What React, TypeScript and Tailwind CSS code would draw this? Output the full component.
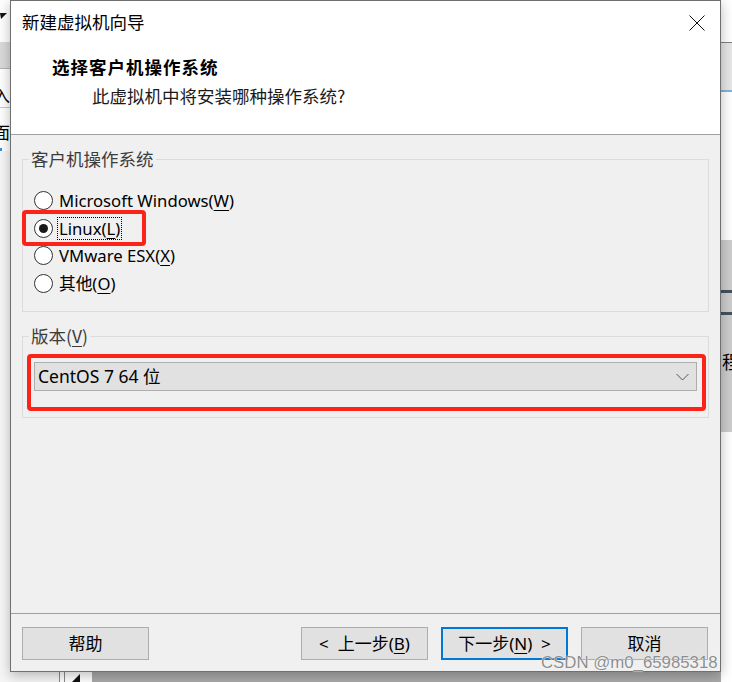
import type { ReactNode } from "react";

const ui = "font-[family-name:'Noto_Sans','Noto_Sans_CJK_SC',sans-serif]";
const cjk = "font-[family-name:'Noto_Sans_CJK_SC',sans-serif]";

function Key({ children }: { children: ReactNode }) {
  return <span className="underline underline-offset-[3px] decoration-1">{children}</span>;
}

function Radio({ checked = false }: { checked?: boolean }) {
  return (
    <span className="flex h-[19px] w-[19px] shrink-0 items-center justify-center rounded-full border border-[#333] bg-white">
      {checked && <span className="h-[9px] w-[9px] rounded-full bg-[#1a1a1a]" />}
    </span>
  );
}

function RadioRow({
  children,
  checked,
  focused,
  marked,
}: {
  children: ReactNode;
  checked?: boolean;
  focused?: boolean;
  marked?: boolean;
}) {
  return (
    <div className="relative flex h-[27.5px] items-center gap-[4px]">
      <Radio checked={checked} />
      <span
        className={`flex h-[23px] items-center border px-[1px] text-[16.7px] text-black ${
          focused ? "border-dotted border-black" : "border-transparent"
        }`}
      >
        {children}
      </span>
      {marked && (
        <span className="pointer-events-none absolute -left-[12px] -top-[4.5px] h-[36px] w-[124px] rounded-[4px] border-[4px] border-[#fd2318]" />
      )}
    </div>
  );
}

function Group({ label, children }: { label: ReactNode; children: ReactNode }) {
  return (
    <fieldset className="border border-[#dcdcdc] p-0">
      <legend className={`ml-[6px] px-[2px] text-[17.5px] leading-[24px] text-[#3c3c3c] ${cjk}`}>{label}</legend>
      {children}
    </fieldset>
  );
}

function Button({ children, primary }: { children: ReactNode; primary?: boolean }) {
  return (
    <button
      className={`flex h-[33px] w-[127px] items-center justify-center bg-[#e1e1e1] text-[17px] text-black ${
        primary ? "border-2 border-[#0078d7]" : "border border-[#adadad]"
      }`}
    >
      {children}
    </button>
  );
}

function Dialog() {
  return (
    <div
      className={`absolute left-[10px] top-0 flex h-[672px] w-[711px] flex-col border border-[#6f6f6f] bg-[#f0f0f0] shadow-[0_3px_12px_rgba(0,0,0,0.28)] ${ui}`}
    >
      <header className="flex h-[134px] flex-col border-b border-[#a0a0a0] bg-white">
        <div className="flex h-[43px] items-center justify-between pl-[11px] pr-[15px]">
          <span className={`text-[17.5px] text-black ${cjk}`}>新建虚拟机向导</span>
          <svg width="16" height="16" viewBox="0 0 16 16" className="mt-[1px]">
            <path d="M0.5 0.5L15.5 15.5M15.5 0.5L0.5 15.5" stroke="#111" strokeWidth="1" />
          </svg>
        </div>
        <div className="mt-[11px] pl-[41px]">
          <h1 className={`text-[17.5px] font-bold leading-[24px] tracking-[1px] text-black ${cjk}`}>
            选择客户机操作系统
          </h1>
          <p className={`mt-[5px] pl-[40px] text-[17.5px] leading-[24px] text-[#1a1a1a] ${cjk}`}>
            此虚拟机中将安装哪种操作系统?
          </p>
        </div>
      </header>

      <main className="flex flex-1 flex-col gap-[12px] px-[11px] pt-[12px]">
        <Group label="客户机操作系统">
          <div className="flex flex-col px-[11px] pb-[14px] pt-[16px]">
            <RadioRow>
              Microsoft Windows(<Key>W</Key>)
            </RadioRow>
            <RadioRow checked focused marked>
              Linux(<Key>L</Key>)
            </RadioRow>
            <RadioRow>
              VMware ESX(<Key>X</Key>)
            </RadioRow>
            <RadioRow>
              其他(<Key>O</Key>)
            </RadioRow>
          </div>
        </Group>

        <Group
          label={
            <>
              版本(<Key>V</Key>)
            </>
          }
        >
          <div className="px-[11px] pb-[26px] pt-[14px]">
            <div className="relative flex h-[29px] items-center justify-between border border-[#adadad] bg-[#e1e1e1] pl-[3px] pr-[7px]">
              <span className="text-[17.5px] text-black">CentOS 7 64 位</span>
              <svg width="13" height="8" viewBox="0 0 13 8">
                <path d="M0.5 1L6.5 7L12.5 1" fill="none" stroke="#555" strokeWidth="1" />
              </svg>
              <span className="pointer-events-none absolute -left-[8px] -top-[9px] h-[57px] w-[679px] rounded-[4px] border-[4px] border-[#fd2318]" />
            </div>
          </div>
        </Group>
      </main>

      <footer className="flex h-[58px] items-start justify-between border-t border-[#a0a0a0] pl-[11px] pr-[12px] pt-[13px]">
        <Button>帮助</Button>
        <div className="flex gap-[13px]">
          <Button>
            &lt;&nbsp; 上一步(<Key>B</Key>)
          </Button>
          <Button primary>
            下一步(<Key>N</Key>)&nbsp; &gt;
          </Button>
          <Button>取消</Button>
        </div>
      </footer>
    </div>
  );
}

export default function App() {
  return (
    <div className={`relative flex h-[682px] w-[732px] overflow-hidden bg-white ${ui}`}>
      <div className="flex flex-1 flex-col">
        <div className="flex h-[672px]">
          {/* left edge of the window behind */}
          <div className="flex w-[10px] flex-col overflow-hidden">
            <div className="h-[42px] bg-white">
              <svg width="10" height="42" viewBox="0 0 10 42">
                <polygon points="0,13 7,13 1,19" fill="#111" />
              </svg>
            </div>
            <div className="h-[27px] border-b border-[#b4b4b4] bg-[#dadada]" />
            <div className="flex h-[39px] items-end border-b border-[#c8c8c8] pb-[4px] text-[17px] leading-none text-black">
              <span className={`-ml-[7px] ${cjk}`}>入</span>
            </div>
            <div className="flex h-[40px] items-center text-[17px] leading-none text-black">
              <span className={`-ml-[7px] mt-[6px] ${cjk}`}>面</span>
            </div>
            <div className="ml-0 h-[3px] w-[2px] bg-[#3b8ee0]" />
            <div className="flex-1 bg-[#f7f7f7]" />
          </div>
          <div className="flex-1" />
        </div>
        <div className="flex h-[10px]">
          <div className="w-[59px] bg-[#f5f5f5]" />
          <div className="w-[6px] border-x border-[#8a8a8a] bg-white" />
          <div className="flex w-[27px] items-end bg-white pl-[7px]">
            <svg width="8" height="8" viewBox="0 0 8 8">
              <polygon points="8,0 8,8 0,8" fill="#111" />
            </svg>
          </div>
          <div className="flex-1 bg-[#a9a9a9]" />
        </div>
      </div>

      {/* right edge of the window behind */}
      <div className="flex w-[11px] flex-col overflow-hidden">
        <div className="h-[42px] bg-white" />
        <div className="h-[50px] border-b-2 border-t border-b-[#7fb3e0] border-t-[#808080] bg-[#e6e6e6]" />
        <div className="h-[148px] bg-white" />
        <div className="flex h-[192px] flex-col bg-[#cdcdcd]">
          <div className="h-[50px]" />
          <div className="h-[3px] bg-[#46525c]" />
          <div className="h-[19px]" />
          <div className="h-[3px] bg-[#46525c]" />
          <div className="flex h-[70px] items-center pt-[22px] text-[18px] leading-none text-black">
            <span className={`pl-[1px] ${cjk}`}>程</span>
          </div>
        </div>
        <div className="flex-1 bg-white" />
      </div>

      <Dialog />

      <span className="pointer-events-none absolute left-[541px] top-[652px] font-[family-name:'Liberation_Sans',sans-serif] text-[16.8px] leading-[22px] text-[#8d8d8d] [text-shadow:0_0_1px_#fff,0_0_1px_#fff]">
        CSDN @m0_65985318
      </span>
    </div>
  );
}
